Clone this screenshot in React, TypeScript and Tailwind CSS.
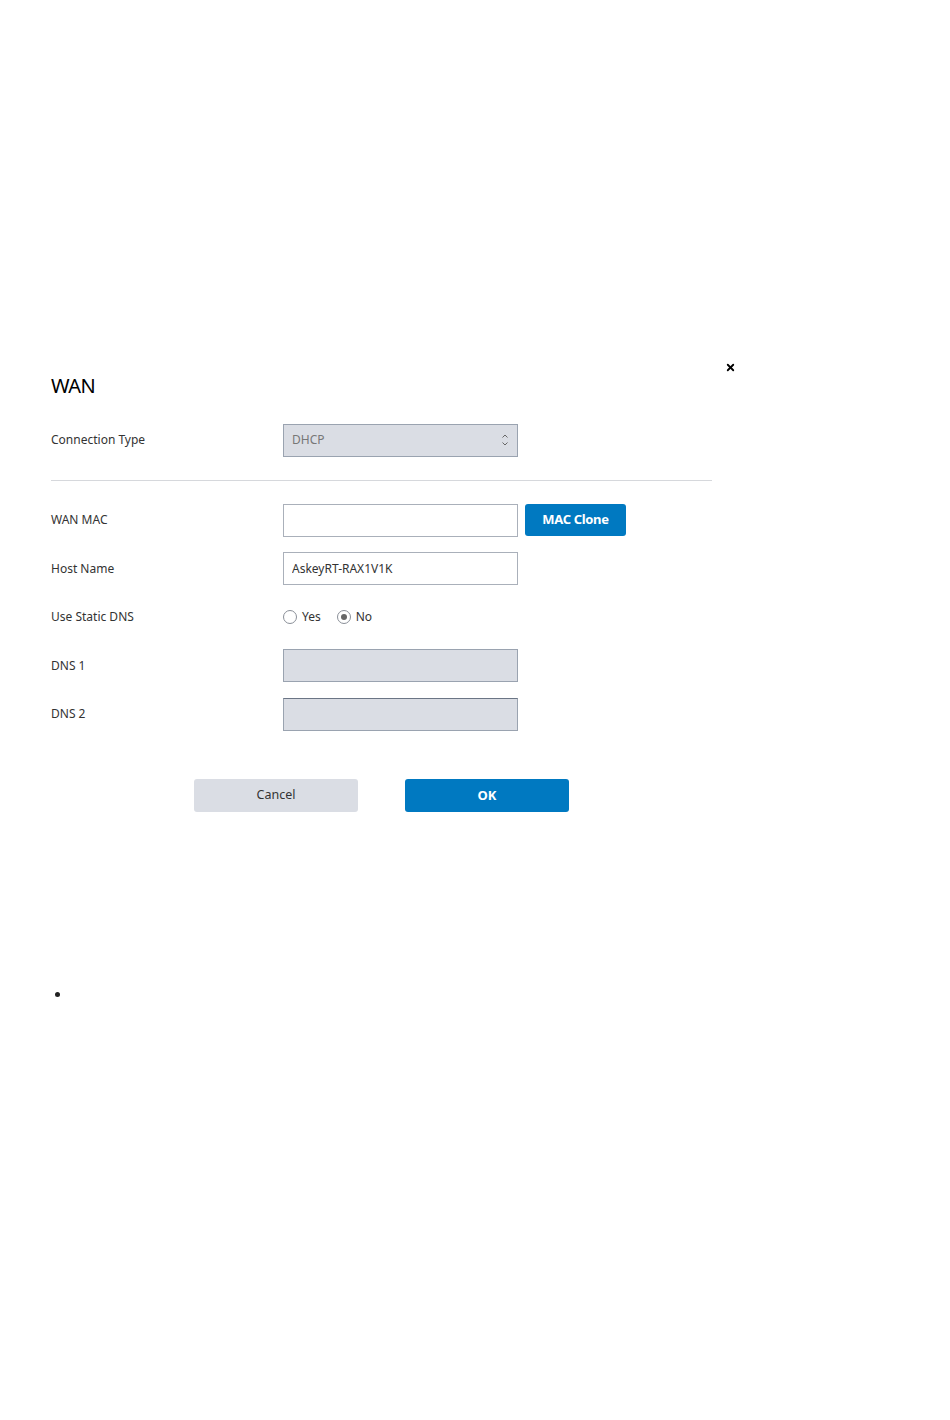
import { X } from 'lucide-react';

/* Field row: label on the left, control at x=283 */
function Row({ label, children }: { label: string; children: React.ReactNode }) {
  return (
    <div className="flex items-center h-8">
      <div className="w-[232px] text-[12px] text-[#333]">{label}</div>
      <div className="flex items-center gap-[7px]">{children}</div>
    </div>
  );
}

function Radio({ checked, label }: { checked?: boolean; label: string }) {
  return (
    <label className="flex items-center gap-[5px] text-[12px] text-[#333]">
      <span className="w-[14px] h-[14px] rounded-full border border-[#8a8f98] bg-white flex items-center justify-center">
        {checked && <span className="w-[6px] h-[6px] rounded-full bg-[#666]" />}
      </span>
      {label}
    </label>
  );
}

export default function App() {
  return (
    <div className="w-[950px] min-h-[1420px] bg-white font-['Noto_Sans',sans-serif] text-[#222]">
      <div className="relative ml-[51px] w-[661px] pt-[374px]">
        <button className="absolute left-[674px] top-[362px] text-black">
          <X size={11} strokeWidth={4} />
        </button>

        <h1 className="text-[20px] leading-6 text-black tracking-tight">WAN</h1>

        <div className="mt-[26px]">
          <Row label="Connection Type">
            <div className="w-[235px] h-[33px] border border-[#9aa3b0] bg-[#dadde4] flex items-center justify-between pl-[8px] pr-[8px]">
              <span className="text-[12px] text-[#777]">DHCP</span>
              <svg width="8" height="14" viewBox="0 0 8 14" fill="none" stroke="#666" strokeWidth="1">
                <path d="M1.5 4.5 L4 2 L6.5 4.5" />
                <path d="M1.5 9.5 L4 12 L6.5 9.5" />
              </svg>
            </div>
          </Row>
        </div>

        <div className="mt-[24px] border-t border-[#d6d8dc]" />

        <div className="mt-[23px] flex flex-col gap-[16.5px]">
          <Row label="WAN MAC">
            <input className="w-[235px] h-[33px] border border-[#aab0ba] bg-white px-[8px] text-[12px] outline-none" />
            <button className="w-[101px] h-[32px] rounded-[3px] bg-[#0079c1] text-white text-[13px] font-bold tracking-tight">
              MAC Clone
            </button>
          </Row>
          <Row label="Host Name">
            <input
              defaultValue="AskeyRT-RAX1V1K"
              className="w-[235px] h-[33px] border border-[#aab0ba] bg-white px-[8px] text-[12px] text-[#333] outline-none"
            />
          </Row>
          <Row label="Use Static DNS">
            <div className="flex items-center gap-[16px]">
              <Radio label="Yes" />
              <Radio checked label="No" />
            </div>
          </Row>
          <Row label="DNS 1">
            <div className="w-[235px] h-[33px] border border-[#9aa3b0] bg-[#dadde4]" />
          </Row>
          <Row label="DNS 2">
            <div className="w-[235px] h-[33px] border border-[#9aa3b0] border-t-[#6b7585] bg-[#dadde4]" />
          </Row>
        </div>

        <div className="mt-[49px] ml-[143px] flex gap-[47px]">
          <button className="w-[164px] h-[33px] rounded-[3px] bg-[#dadde4] text-[12.5px] text-[#333]">Cancel</button>
          <button className="w-[164px] h-[33px] rounded-[3px] bg-[#0079c1] text-[13px] font-bold text-white">OK</button>
        </div>

        <ul className="mt-[172px] list-disc pl-[21px] text-[14px]">
          <li>&nbsp;</li>
        </ul>
      </div>
    </div>
  );
}
